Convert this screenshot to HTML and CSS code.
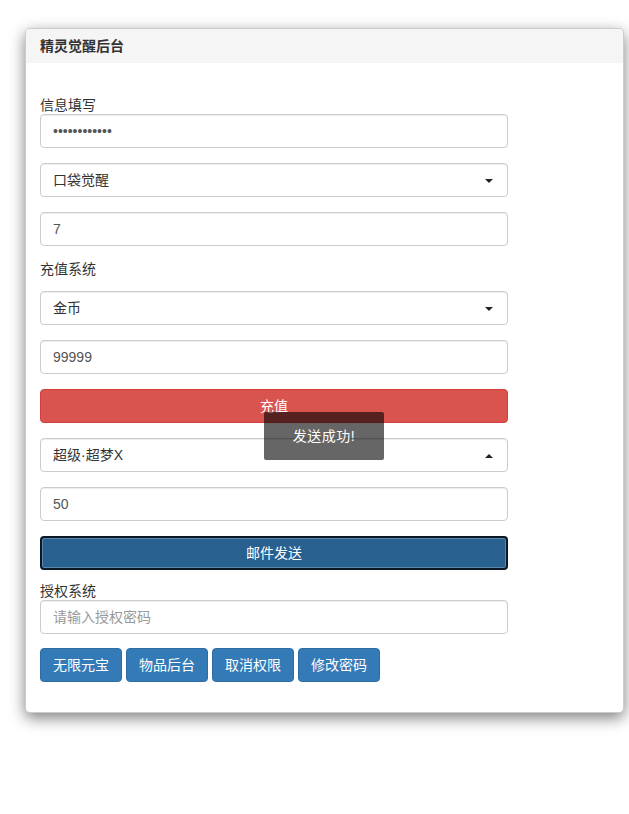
FILE: index.html
```html
<!DOCTYPE html>
<html lang="zh-CN">
<head>
<meta charset="utf-8">
<title>精灵觉醒后台</title>
<link rel="stylesheet" href="styles.css">
</head>
<body>
<div class="page">
  <div class="card">
    <div class="card-header">精灵觉醒后台</div>
    <div class="card-body">
      <label class="label label-first">信息填写</label>
      <input class="control" type="password" value="123456789012">
      <div class="control select">口袋觉醒<span class="caret"></span></div>
      <input class="control mb12" type="text" value="7">
      <label class="label label-mid">充值系统</label>
      <div class="control select">金币<span class="caret"></span></div>
      <input class="control" type="text" value="99999">
      <button class="btn btn-danger btn-block">充值</button>
      <div class="control select">超级·超梦X<span class="caret caret-up"></span></div>
      <input class="control" type="text" value="50">
      <button class="btn btn-primary btn-block btn-focus">邮件发送</button>
      <label class="label label-first">授权系统</label>
      <input class="control mb14" type="text" placeholder="请输入授权密码">
      <div class="btn-row">
        <button class="btn btn-primary">无限元宝</button>
        <button class="btn btn-primary">物品后台</button>
        <button class="btn btn-primary">取消权限</button>
        <button class="btn btn-primary">修改密码</button>
      </div>
    </div>
  </div>
</div>
<div class="toast">发送成功!</div>
</body>
</html>
```
FILE: styles.css
```css
* { box-sizing: border-box; }
html, body {
  margin: 0;
  padding: 0;
  background: #fff;
}
body {
  font-family: "Liberation Sans", "Noto Sans CJK SC", sans-serif;
  font-size: 14px;
  color: #333;
  position: relative;
  min-height: 814px;
}
.page {
  padding: 28px 0 0 25px;
}
.card {
  width: 599px;
  border: 1px solid rgba(0, 0, 0, 0.2);
  border-radius: 5px;
  background: #fff;
  box-shadow: 0 5px 15px rgba(0, 0, 0, 0.5);
  overflow: hidden;
}
.card-header {
  height: 34px;
  line-height: 34px;
  padding: 0 14px;
  background: #f5f5f5;
  font-weight: bold;
  font-size: 14px;
  color: #333;
}
.card-body {
  padding: 31px 14px 30px 14px;
}
.label {
  display: block;
  height: 20px;
  line-height: 22px;
  font-size: 14px;
  color: #333;
}
.label-mid {
  margin-bottom: 13px;
}
.control {
  display: block;
  width: 468px;
  height: 34px;
  margin: 0 0 15px 0;
  padding: 6px 12px;
  font-family: "Liberation Sans", "Noto Sans CJK SC", sans-serif;
  font-size: 14px;
  line-height: 20px;
  color: #555;
  background: #fff;
  border: 1px solid #ccc;
  border-radius: 4px;
  box-shadow: inset 0 1px 1px rgba(0, 0, 0, 0.075);
  outline: none;
}
.control::placeholder {
  color: #999;
}
.control[type="password"] {
  font-size: 14px;
  letter-spacing: 0;
  color: #555;
}
.mb12 { margin-bottom: 12px; }
.mb14 { margin-bottom: 14px; }
.select {
  position: relative;
  color: #333;
}
.caret {
  position: absolute;
  right: 14px;
  top: 15px;
  width: 0;
  height: 0;
  border-left: 4px solid transparent;
  border-right: 4px solid transparent;
  border-top: 4px solid #222;
}
.caret-up {
  border-top: none;
  border-bottom: 4px solid #222;
}
.btn {
  display: inline-block;
  height: 34px;
  padding: 6px 12px;
  font-family: "Liberation Sans", "Noto Sans CJK SC", sans-serif;
  font-size: 14px;
  line-height: 20px;
  color: #fff;
  border: 1px solid transparent;
  border-radius: 4px;
  text-align: center;
  cursor: pointer;
  white-space: nowrap;
}
.btn-block {
  display: block;
  width: 468px;
  margin-bottom: 15px;
}
.btn-danger {
  background: #d9534f;
  border-color: #d43f3a;
}
.btn-primary {
  background: #337ab7;
  border-color: #2e6da4;
}
.btn-focus {
  background: #286090;
  border: 2px solid #0b1824;
  box-shadow: inset 0 0 0 1px #5b86ad;
  padding: 5px 12px;
  margin-bottom: 10px;
}
.btn-row {
  display: flex;
  gap: 4px;
}
.btn-row .btn {
  width: 82px;
  padding: 6px 0;
}
.toast {
  position: absolute;
  left: 264px;
  top: 412px;
  width: 120px;
  height: 48px;
  line-height: 48px;
  text-align: center;
  background: rgba(0, 0, 0, 0.6);
  color: #fff;
  font-size: 14px;
  letter-spacing: 0.5px;
  border-radius: 2px;
}
```
